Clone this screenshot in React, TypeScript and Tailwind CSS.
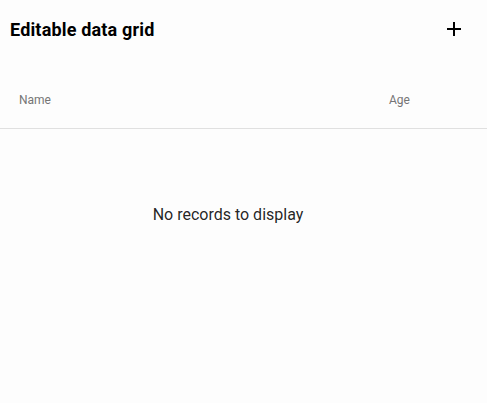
import React from "react";

export default function App() {
  return (
    <div className="w-[487px] h-[403px] bg-[#fdfdfd] text-[rgba(0,0,0,0.87)]" style={{ fontFamily: "Roboto, 'Noto Sans', sans-serif" }}>
      <div className="h-[58px] flex items-center justify-between pl-[10px] pr-[21px]">
        <h6 className="text-[18px] font-bold tracking-[0.17px] text-black">Editable data grid</h6>
        <svg width="24" height="24" viewBox="0 0 24 24" className="fill-[#000]">
          <path d="M19 13h-6v6h-2v-6H5v-2h6V5h2v6h6v2z" />
        </svg>
      </div>
      <div className="h-[71px] flex items-center border-b border-[#e0e0e0] pt-[14px] text-[12px] font-normal text-[#757575]">
        <div className="w-[389px] pl-[19px]">Name</div>
        <div>Age</div>
      </div>
      <div className="w-[456px] h-[172px] flex items-center justify-center text-[16px]">
        No records to display
      </div>
    </div>
  );
}
